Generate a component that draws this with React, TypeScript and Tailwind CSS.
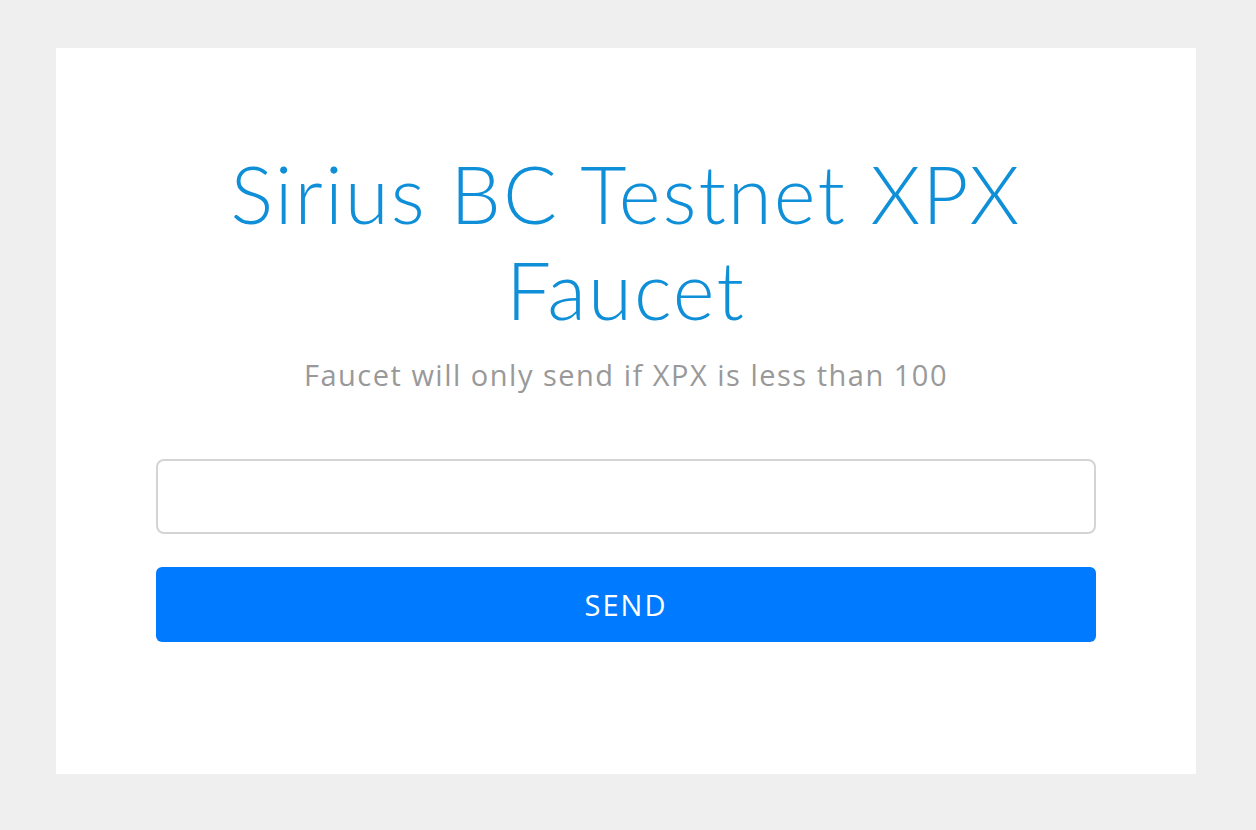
export default function App() {
  return (
    <div className="min-h-screen bg-[#efefef] pl-[56px] pt-[48px] pb-[56px]">
      <div className="flex h-[726px] w-[1140px] flex-col items-center bg-white px-[100px] pt-[97px]">
        <h1 className="w-full text-center font-['Lato',sans-serif] text-[80px] font-light leading-[96px] tracking-[2px] text-[#0f8fd8]">
          Sirius BC Testnet XPX Faucet
        </h1>
        <p className="mt-[21px] text-center font-['Open_Sans',sans-serif] text-[29px] leading-[34px] tracking-[1.5px] text-[#999999]">
          Faucet will only send if XPX is less than 100
        </p>
        <input
          type="text"
          className="mt-[67px] h-[75px] w-full rounded-lg border-2 border-[#d4d4d4] bg-white px-4 font-['Open_Sans',sans-serif] text-[24px] outline-none"
        />
        <button className="mt-[33px] h-[75px] w-full rounded-md bg-[#007bff] font-['Open_Sans',sans-serif] text-[29px] tracking-[2px] text-white">
          SEND
        </button>
      </div>
    </div>
  );
}
